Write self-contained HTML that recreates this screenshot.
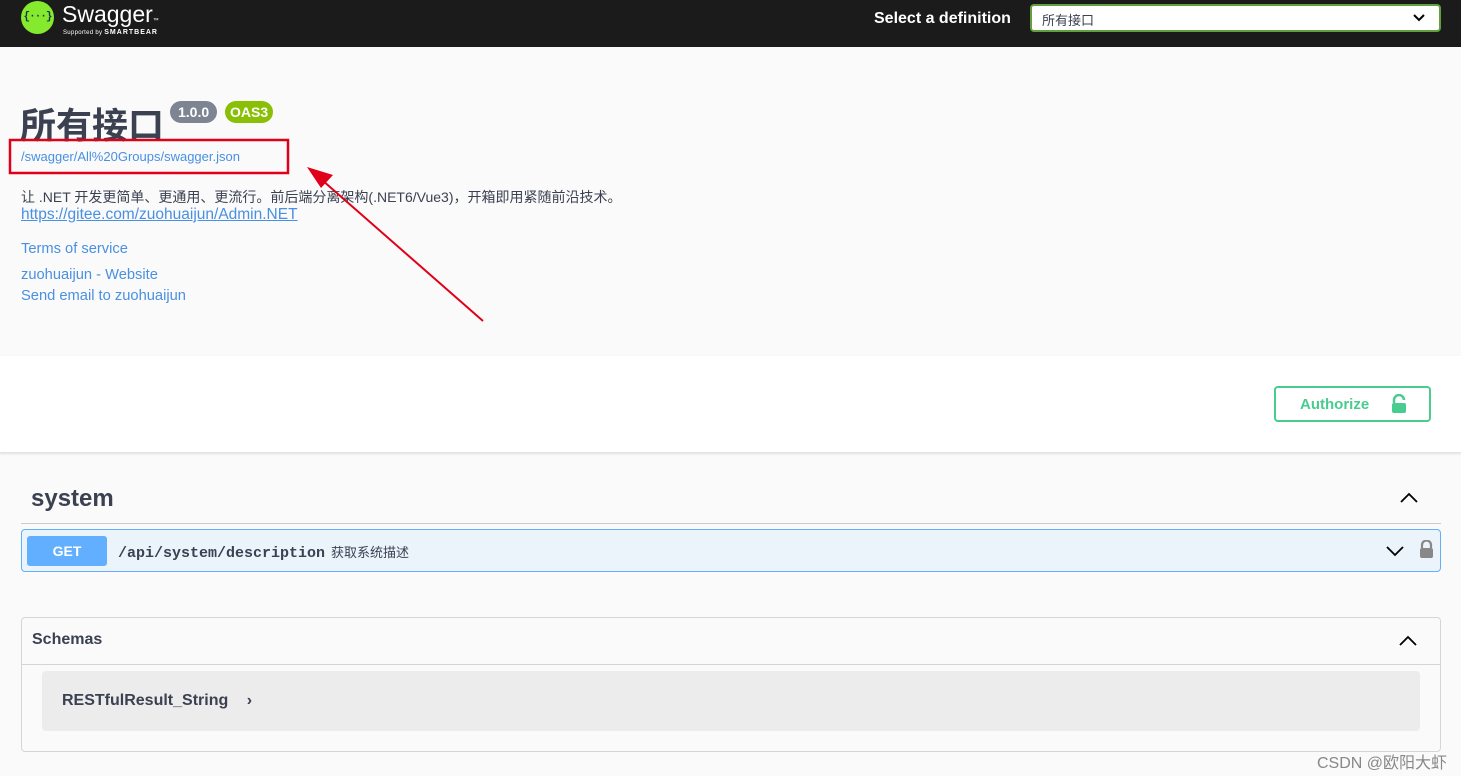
<!DOCTYPE html>
<html><head><meta charset="utf-8"><style>
*{box-sizing:border-box;margin:0;padding:0}
body{width:1461px;height:776px;overflow:hidden;background:#fafafa;font-family:"Liberation Sans","Noto Sans CJK SC",sans-serif;color:#3b4151;position:relative}
.top{height:47px;background:#1b1b1b;position:relative}
.logo{position:absolute;left:21px;top:1px;width:33px;height:33px;border-radius:50%;background:#85ea2d;color:#173647;font:bold 11px "Liberation Mono",monospace;text-align:center;line-height:32px;letter-spacing:-1px;overflow:hidden}
.sw{position:absolute;left:62px;top:1px;color:#fff;font-size:23px}
.sb{position:absolute;left:63px;top:29px;color:#fff;font-size:6px;letter-spacing:.3px}
.sb b{font-size:7px;letter-spacing:1px}
.sel-l{position:absolute;left:874px;top:10px;color:#fff;font-weight:bold;font-size:16px}
.sel{position:absolute;left:1030px;top:4px;width:411px;height:28px;border:2px solid #62a03f;border-radius:4px;background:#fff;font-size:13px;padding:4px 10px;color:#3b4151}
.sel svg{position:absolute;right:14px;top:8px}
h1{position:absolute;left:20px;top:97px;font-size:36px;font-weight:bold;color:#3b4151}
.badge{position:absolute;top:101px;height:22px;border-radius:11px;color:#fff;font-weight:bold;font-size:14px;line-height:22px;padding:0 8px}
a{color:#4990e2;text-decoration:none}
.t{position:absolute;left:21px;font-size:14.7px}
.auth{position:absolute;left:0;top:356px;width:1461px;height:97px;background:#fff;border-bottom:1px solid #e3e3e3;box-shadow:0 1px 2px rgba(0,0,0,.1)}
.abtn{position:absolute;left:1274px;top:30px;width:157px;height:36px;border:2px solid #49cc90;border-radius:4px;color:#49cc90;font-weight:bold;font-size:15px;padding:8px 0 0 24px}
.abtn svg{position:absolute;right:22px;top:6px}
.tag{position:absolute;left:21px;top:477px;width:1420px;height:47px;border-bottom:1px solid #ccc}
.tag span{position:absolute;left:10px;top:8px;font-size:24px;font-weight:bold}
.op{position:absolute;left:21px;top:529px;width:1420px;height:43px;background:#ebf3fb;border:1px solid #61affe;border-radius:4px}
.get{position:absolute;left:5px;top:6px;width:80px;height:30px;background:#61affe;color:#fff;border-radius:3px;font-weight:bold;font-size:14px;text-align:center;line-height:30px}
.path{position:absolute;left:96px;top:12px;font:bold 15px "Liberation Mono",monospace;color:#3b4151}
.path small{font:13px "Liberation Sans","Noto Sans CJK SC",sans-serif;margin-left:6px}
.sch{position:absolute;left:21px;top:617px;width:1420px;height:135px;border:1px solid #d5d5d5;border-radius:4px}
.sch .h{height:47px;border-bottom:1px solid #d5d5d5;font-size:16px;font-weight:bold;padding:13px 10px}
.model{position:absolute;left:20px;top:53px;width:1378px;height:60px;background:#ececec;border-radius:4px;font-size:16px;font-weight:bold;padding:21px 20px}
</style></head><body>
<div class="top"><div class="logo">{···}</div><div class="sw">Swagger<span style="font-size:6px">™</span></div><div class="sb">Supported by <b>SMARTBEAR</b></div>
<div class="sel-l">Select a definition</div><div class="sel">所有接口<svg width="12" height="8" viewBox="0 0 12 8"><path d="M1 1l5 5 5-5" stroke="#000" stroke-width="2" fill="none"/></svg></div></div>
<h1>所有接口</h1>
<div class="badge" style="left:170px;background:#7d8492">1.0.0</div>
<div class="badge" style="left:225px;background:#89bf04;padding:0 5px">OAS3</div>
<a class="t" style="top:149px;font-size:13px" href="#">/swagger/All%20Groups/swagger.json</a>
<div class="t" style="top:187px;font-size:14px">让 .NET 开发更简单、更通用、更流行。前后端分离架构(.NET6/Vue3)，开箱即用紧随前沿技术。</div>
<a class="t" style="top:206px;text-decoration:underline;font-size:15.5px" href="#">https://gitee.com/zuohuaijun/Admin.NET</a>
<a class="t" style="top:241px" href="#">Terms of service</a>
<a class="t" style="top:267px" href="#">zuohuaijun - Website</a>
<a class="t" style="top:288px" href="#">Send email to zuohuaijun</a>
<div class="auth"><div class="abtn">Authorize<svg width="16" height="20" viewBox="0 0 16 20"><path d="M3 9V6a5 5 0 0 1 10 0" stroke="#49cc90" stroke-width="2.5" fill="none"/><rect x="1" y="9" width="14" height="10" rx="2" fill="#49cc90"/></svg></div></div>
<div class="tag"><span>system</span><svg style="position:absolute;right:22px;top:14px" width="20" height="12" viewBox="0 0 20 12"><path d="M2 11l8-8 8 8" stroke="#000" stroke-width="1.8" fill="none"/></svg></div>
<div class="op"><div class="get">GET</div><div class="path">/api/system/description<small>获取系统描述</small></div>
<svg style="position:absolute;right:36px;top:16px" width="18" height="11" viewBox="0 0 18 11"><path d="M1 1l8 8 8-8" stroke="#000" stroke-width="1.8" fill="none"/></svg>
<svg style="position:absolute;right:6px;top:10px" width="15" height="18" viewBox="0 0 15 18"><path d="M3 8V5a4.5 4.5 0 0 1 9 0v3" stroke="#888" stroke-width="2.2" fill="none"/><rect x="1" y="8" width="13" height="10" rx="2" fill="#888"/></svg></div>
<div class="sch"><div class="h">Schemas</div><svg style="position:absolute;right:22px;top:16px" width="20" height="12" viewBox="0 0 20 12"><path d="M2 11l8-8 8 8" stroke="#000" stroke-width="1.8" fill="none"/></svg>
<div class="model">RESTfulResult_String <span style="margin-left:14px;font-size:16px">›</span></div></div>
<svg style="position:absolute;left:0;top:0" width="1461" height="776"><rect x="10" y="140" width="278" height="33" fill="none" stroke="#e0001a" stroke-width="2.5"/><line x1="483" y1="321" x2="322" y2="180" stroke="#e0001a" stroke-width="2"/><path d="M307 167l26 8-12 13z" fill="#e0001a"/></svg>
<div style="position:absolute;right:14px;top:749px;font-size:16px;color:#888">CSDN @欧阳大虾</div>
</body></html>
